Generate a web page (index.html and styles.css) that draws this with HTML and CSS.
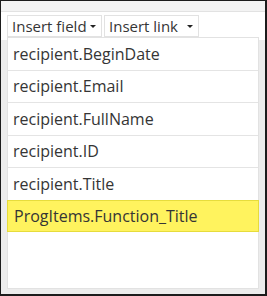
FILE: index.html
```html
<!DOCTYPE html>
<html>
  <head>
    <meta charset="UTF-8" />
    <title>Insert field</title>
    <link rel="stylesheet" href="styles.css">
  </head>
  <body>
    <div class="frame">
      <div class="topbar"></div>

      <div class="toolbar">
        <button class="tool-button">
          <span class="tool-label">Insert field</span>
          <span class="caret"></span>
        </button>
        <button class="tool-button">
          <span class="tool-label">Insert link</span>
          <span class="caret"></span>
        </button>
      </div>

      <div class="content">
        <ul class="field-list">
          <li class="field-item">recipient.BeginDate</li>
          <li class="field-item">recipient.Email</li>
          <li class="field-item">recipient.FullName</li>
          <li class="field-item">recipient.ID</li>
          <li class="field-item">recipient.Title</li>
          <li class="field-item selected">ProgItems.Function_Title</li>
        </ul>
      </div>
    </div>
  </body>
</html>
```

FILE: styles.css
```css
* {
  box-sizing: border-box;
  margin: 0;
  padding: 0;
}

html,
body {
  height: 100%;
}

body {
  font-family: "Open Sans", "Liberation Sans", sans-serif;
  color: #353535;
  background: #ffffff;
}

.frame {
  height: 296px;
  display: flex;
  flex-direction: column;
  border-top: 1px solid #1c1c1c;
  border-left: 1px solid #1c1c1c;
  border-right: 2px solid #1c1c1c;
  border-bottom: 2px solid #1c1c1c;
  background: #ececec;
}

.topbar {
  height: 11px;
  background: #f3f3f3;
  border-bottom: 1px solid #e2e2e2;
}

.toolbar {
  display: flex;
  gap: 2px;
  height: 28px;
  padding: 3px 6px;
  background: #ffffff;
}

.tool-button {
  width: 95px;
  height: 22px;
  display: flex;
  align-items: center;
  justify-content: space-between;
  padding: 0 5px 0 4px;
  background: #ffffff;
  border: 1px solid #e2e2e2;
  font-family: inherit;
  font-size: 15px;
  color: #353535;
}

.caret {
  width: 0;
  height: 0;
  border-left: 3px solid transparent;
  border-right: 3px solid transparent;
  border-top: 3px solid #222222;
}

.content {
  flex: 1;
  display: flex;
  flex-direction: column;
  padding: 0 6px 5px 6px;
}

.field-list {
  flex: 1;
  list-style: none;
  margin-top: -3px;
  background: #ffffff;
  border: 1px solid #e2e2e2;
}

.field-item {
  height: 32.5px;
  display: flex;
  align-items: center;
  padding: 0 5px;
  font-size: 16px;
  border-bottom: 1px solid #e4e4e4;
}

.field-item.selected {
  background: #fff35e;
  border: 1px solid #e6dc3c;
  margin: -1px -1px 0 -1px;
  padding-left: 6px;
}
```
